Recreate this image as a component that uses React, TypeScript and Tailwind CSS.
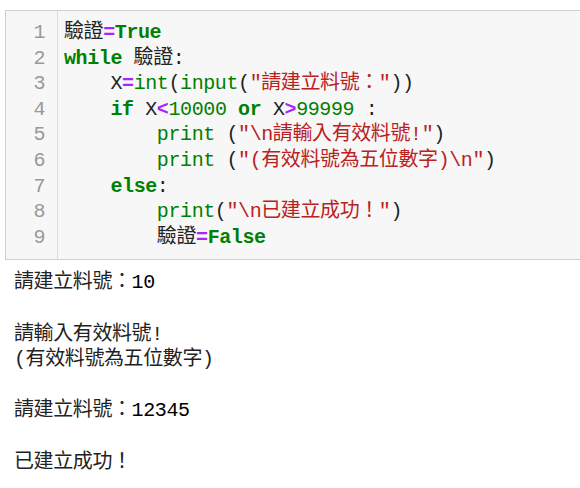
import React from 'react';

const K = ({ children }: { children: React.ReactNode }) => (
  <span className="font-bold text-[#008000]">{children}</span>
);
const B = ({ children }: { children: React.ReactNode }) => (
  <span className="text-[#008000]">{children}</span>
);
const S = ({ children }: { children: React.ReactNode }) => (
  <span className="text-[#ba2121]">{children}</span>
);
const O = ({ children }: { children: React.ReactNode }) => (
  <span className="font-bold text-[#aa22ff]">{children}</span>
);

const lines: React.ReactNode[] = [
  <>驗證<O>=</O><K>True</K></>,
  <><K>while</K> 驗證:</>,
  <>    X<O>=</O><B>int</B>(<B>input</B>(<S>"請建立料號："</S>))</>,
  <>    <K>if</K> X<O>&lt;</O><B>10000</B> <K>or</K> X<O>&gt;</O><B>99999</B> :</>,
  <>        <B>print</B> (<S>"\n請輸入有效料號!"</S>)</>,
  <>        <B>print</B> (<S>"(有效料號為五位數字)\n"</S>)</>,
  <>    <K>else</K>:</>,
  <>        <B>print</B>(<S>"\n已建立成功！"</S>)</>,
  <>        驗證<O>=</O><K>False</K></>,
];

const output = [
  <>請建立料號：<span className="text-black">10</span></>,
  '',
  '請輸入有效料號!',
  '(有效料號為五位數字)',
  '',
  <>請建立料號：<span className="text-black">12345</span></>,
  '',
  '已建立成功！',
];

export default function App() {
  const mono = "font-['Liberation_Mono','Noto_Sans_CJK_TC',monospace] text-[20px] tracking-[-0.4px] leading-[25.6px]";
  return (
    <div className="w-[580px] h-[488px] bg-white pt-[10px] pl-[5px] overflow-hidden">
      <div className={`flex border border-r-0 border-[#cfcfcf] bg-[#f7f7f7] ${mono}`}>
        <div className="w-[52px] shrink-0 border-r border-[#dddddd] pt-[9px] pb-[9px] pr-[12px] text-right text-[#999999]">
          {lines.map((_, i) => (
            <div key={i}>{i + 1}</div>
          ))}
        </div>
        <div className="pl-[6px] pt-[9px] pb-[9px] text-[#222222] whitespace-pre">
          {lines.map((l, i) => (
            <div key={i}>{l}</div>
          ))}
        </div>
      </div>
      <div className={`pl-[9px] pt-[10px] text-[#222222] whitespace-pre ${mono}`}>
        {output.map((l, i) => (
          <div key={i} className="h-[25.6px]">{l}</div>
        ))}
      </div>
    </div>
  );
}
